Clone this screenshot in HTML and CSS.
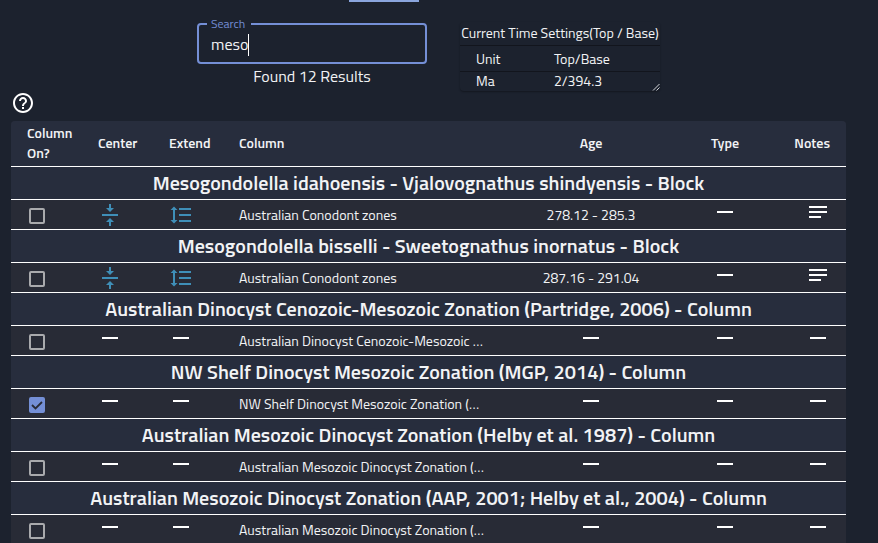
FILE: index.html
```html
<!DOCTYPE html>
<html lang="en">
<head>
<meta charset="utf-8">
<title>Column search</title>
<link rel="stylesheet" href="styles.css">
</head>
<body>
<svg class="sprite" aria-hidden="true">
  <symbol id="dash" viewBox="0 0 24 24"><path fill="currentColor" d="M4 8h16v2H4z"/></symbol>
  <symbol id="notes" viewBox="0 0 24 24"><path fill="currentColor" d="M3 5h18v2H3zM3 10h18v2H3zM3 15h12v2H3z"/></symbol>
  <symbol id="center" viewBox="0 0 24 24"><path fill="currentColor" d="M4 11h16v2H4zM11 1h2v4h3l-4 4-4-4h3zM11 23h2v-4h3l-4-4-4 4h3z"/></symbol>
  <symbol id="extend" viewBox="0 0 24 24"><path fill="currentColor" d="M10 5h12v2H10zM10 11h12v2H10zM10 17h12v2H10zM5 3.500L8.500 7H6v10h2.500L5 20.500 1.500 17H4V7H1.500z"/></symbol>
</svg>
<div class="tabs"><span class="indicator"></span></div>
<main>
  <div class="top">
    <section class="search">
      <fieldset class="field">
        <legend><label for="search">Search</label></legend>
        <input id="search" type="text" value="meso">
        <span class="caret"></span>
      </fieldset>
      <p class="found">Found 12 Results</p>
    </section>
    <section class="time">
      <table>
        <caption>Current Time Settings(Top / Base)</caption>
        <thead><tr><th>Unit</th><th>Top/Base</th></tr></thead>
        <tbody><tr><td>Ma</td><td>2/394.3</td></tr></tbody>
      </table>
      <svg class="grip" viewBox="0 0 8 8" aria-hidden="true"><path d="M1 7.500L7.500 1M4.500 7.500L7.500 4.500" stroke="#d0d2d6" fill="none"/></svg>
    </section>
  </div>
  <button class="help" type="button" aria-label="Help"><svg viewBox="0 0 24 24" aria-hidden="true"><path fill="currentColor" d="M11 18h2v-2h-2v2zm1-16C6.480 2 2 6.480 2 12s4.480 10 10 10 10-4.480 10-10S17.520 2 12 2zm0 18c-4.410 0-8-3.590-8-8s3.590-8 8-8 8 3.590 8 8-3.590 8-8 8zm0-14c-2.210 0-4 1.790-4 4h2c0-1.100.9-2 2-2s2 .9 2 2c0 2-3 1.750-3 5h2c0-2.250 3-2.500 3-5 0-2.210-1.790-4-4-4z"/></svg></button>
  <table class="results">
    <colgroup><col class="c-on"><col class="c-center"><col class="c-extend"><col><col class="c-age"><col class="c-type"><col class="c-notes"></colgroup>
    <thead>
      <tr><th>Column On?</th><th>Center</th><th>Extend</th><th>Column</th><th class="mid">Age</th><th class="mid">Type</th><th class="end">Notes</th></tr>
    </thead>
    <tbody>
      <tr class="group"><th colspan="7">Mesogondolella idahoensis - Vjalovognathus shindyensis - Block</th></tr>
      <tr>
        <td><input type="checkbox" aria-label="Australian Conodont zones"></td>
        <td><svg class="icon blue"><use href="#center"/></svg></td>
        <td><svg class="icon blue"><use href="#extend"/></svg></td>
        <td>Australian Conodont zones</td>
        <td class="mid">278.12 - 285.3</td>
        <td class="mid"><svg class="icon"><use href="#dash"/></svg></td>
        <td class="end"><svg class="icon notes"><use href="#notes"/></svg></td>
      </tr>
      <tr class="group"><th colspan="7">Mesogondolella bisselli - Sweetognathus inornatus - Block</th></tr>
      <tr>
        <td><input type="checkbox" aria-label="Australian Conodont zones"></td>
        <td><svg class="icon blue"><use href="#center"/></svg></td>
        <td><svg class="icon blue"><use href="#extend"/></svg></td>
        <td>Australian Conodont zones</td>
        <td class="mid">287.16 - 291.04</td>
        <td class="mid"><svg class="icon"><use href="#dash"/></svg></td>
        <td class="end"><svg class="icon notes"><use href="#notes"/></svg></td>
      </tr>
      <tr class="group"><th colspan="7">Australian Dinocyst Cenozoic-Mesozoic Zonation (Partridge, 2006) - Column</th></tr>
      <tr>
        <td><input type="checkbox" aria-label="Australian Dinocyst Cenozoic-Mesozoic"></td>
        <td><svg class="icon"><use href="#dash"/></svg></td>
        <td><svg class="icon"><use href="#dash"/></svg></td>
        <td>Australian Dinocyst Cenozoic-Mesozoic …</td>
        <td class="mid"><svg class="icon"><use href="#dash"/></svg></td>
        <td class="mid"><svg class="icon"><use href="#dash"/></svg></td>
        <td class="end"><svg class="icon"><use href="#dash"/></svg></td>
      </tr>
      <tr class="group"><th colspan="7">NW Shelf Dinocyst Mesozoic Zonation (MGP, 2014) - Column</th></tr>
      <tr>
        <td><input type="checkbox" aria-label="NW Shelf Dinocyst Mesozoic Zonation" checked></td>
        <td><svg class="icon"><use href="#dash"/></svg></td>
        <td><svg class="icon"><use href="#dash"/></svg></td>
        <td>NW Shelf Dinocyst Mesozoic Zonation (…</td>
        <td class="mid"><svg class="icon"><use href="#dash"/></svg></td>
        <td class="mid"><svg class="icon"><use href="#dash"/></svg></td>
        <td class="end"><svg class="icon"><use href="#dash"/></svg></td>
      </tr>
      <tr class="group"><th colspan="7">Australian Mesozoic Dinocyst Zonation (Helby et al. 1987) - Column</th></tr>
      <tr>
        <td><input type="checkbox" aria-label="Australian Mesozoic Dinocyst Zonation"></td>
        <td><svg class="icon"><use href="#dash"/></svg></td>
        <td><svg class="icon"><use href="#dash"/></svg></td>
        <td>Australian Mesozoic Dinocyst Zonation (…</td>
        <td class="mid"><svg class="icon"><use href="#dash"/></svg></td>
        <td class="mid"><svg class="icon"><use href="#dash"/></svg></td>
        <td class="end"><svg class="icon"><use href="#dash"/></svg></td>
      </tr>
      <tr class="group"><th colspan="7">Australian Mesozoic Dinocyst Zonation (AAP, 2001; Helby et al., 2004) - Column</th></tr>
      <tr>
        <td><input type="checkbox" aria-label="Australian Mesozoic Dinocyst Zonation"></td>
        <td><svg class="icon"><use href="#dash"/></svg></td>
        <td><svg class="icon"><use href="#dash"/></svg></td>
        <td>Australian Mesozoic Dinocyst Zonation (…</td>
        <td class="mid"><svg class="icon"><use href="#dash"/></svg></td>
        <td class="mid"><svg class="icon"><use href="#dash"/></svg></td>
        <td class="end"><svg class="icon"><use href="#dash"/></svg></td>
      </tr>
    </tbody>
  </table>
</main>
</body>
</html>
```

FILE: styles.css
```css
* { box-sizing: border-box; }
html { background: #1c222e; overflow: hidden; }
body {
  margin: 0;
  color: #f2f3f5;
  font: 400 14px/20px "Titillium Web", Roboto, sans-serif;
}
.sprite { position: absolute; width: 0; height: 0; }
.tabs { display: flex; justify-content: center; height: 2px; padding-right: 110px; }
.indicator { width: 70px; background: #8aa5dd; }
main { padding: 14px 32px 0 11px; }
.top { display: flex; justify-content: center; gap: 33px; }
.search { width: 230px; }
.field {
  position: relative;
  margin: 0;
  padding: 0 12px;
  height: 48px;
  border: 2px solid #748fd6;
  border-radius: 4px;
}
.field legend { margin-left: -4px; padding: 0 6px 0 4px; font-size: 12px; line-height: 16px; color: #748fd6; }
.field input {
  display: block;
  width: 100%;
  height: 24px;
  padding: 0;
  border: 0;
  outline: 0;
  background: none;
  color: inherit;
  font: inherit;
  font-size: 16px;
}
.caret { position: absolute; left: 49px; top: 2px; width: 1px; height: 22px; background: #fff; }
.found { margin: 2px 0 0; text-align: center; font-size: 16px; line-height: 20px; }
.time { position: relative; width: 200px; height: 69px; margin-top: 6px; border-radius: 4px; box-shadow: 0 1px 2px #0005; }
.time table { width: 100%; border-collapse: collapse; table-layout: fixed; }
.time caption { height: 23px; line-height: 22px; white-space: nowrap; }
.time th, .time td { padding: 0 16px; text-align: left; font-weight: 400; }
.time th { height: 26px; border-top: 1px solid #12151d; border-bottom: 1px solid #12151d; }
.time td { height: 19px; line-height: 18px; }
.time th:first-child { width: 78px; }
.grip { position: absolute; right: 0; bottom: 0; width: 8px; height: 8px; }
.help { display: block; width: 24px; height: 24px; margin: 0; padding: 0; border: 0; background: none; color: #fff; }
.help svg { display: block; width: 24px; height: 24px; }
.results {
  width: 100%;
  margin-top: 6px;
  border-collapse: separate;
  border-spacing: 0;
  table-layout: fixed;
  background: #282b36;
  border-radius: 4px 4px 0 0;
  overflow: hidden;
}
.c-on, .c-center { width: 71px; }
.c-extend { width: 70px; }
.c-age { width: 162px; }
.c-type { width: 106px; }
.c-notes { width: 68px; }
.results th, .results td { padding: 0 0 0 16px; text-align: left; white-space: nowrap; border-bottom: 1px solid #fff; }
.results th { background: #272d3d; }
.results thead th { height: 46px; padding-bottom: 2px; font-weight: 600; white-space: normal; }
.results .group th { height: 33px; padding: 0; text-align: center; font-size: 20px; font-weight: 600; }
.results td { height: 30px; }
.results .mid { padding-left: 0; text-align: center; }
.results .end { padding-left: 0; padding-right: 16px; text-align: right; }
.icon { display: inline-block; width: 24px; height: 24px; color: #fff; vertical-align: middle; }
.blue { color: #3f8fb8; }
.notes { margin-bottom: 4px; }
.results input {
  display: block;
  appearance: none;
  width: 16px;
  height: 16px;
  margin: 2px 0 0 2px;
  border: 2px solid #a9aaad;
  border-radius: 2px;
}
.results input:checked {
  border-color: #748fd6;
  background: #748fd6 url("data:image/svg+xml,%3Csvg xmlns='http://www.w3.org/2000/svg' viewBox='0 0 12 12'%3E%3Cpath d='M1 6l3.500 3.500L11 3' fill='none' stroke='%23282b36' stroke-width='1.800'/%3E%3C/svg%3E") center / 12px 12px no-repeat;
}
```
